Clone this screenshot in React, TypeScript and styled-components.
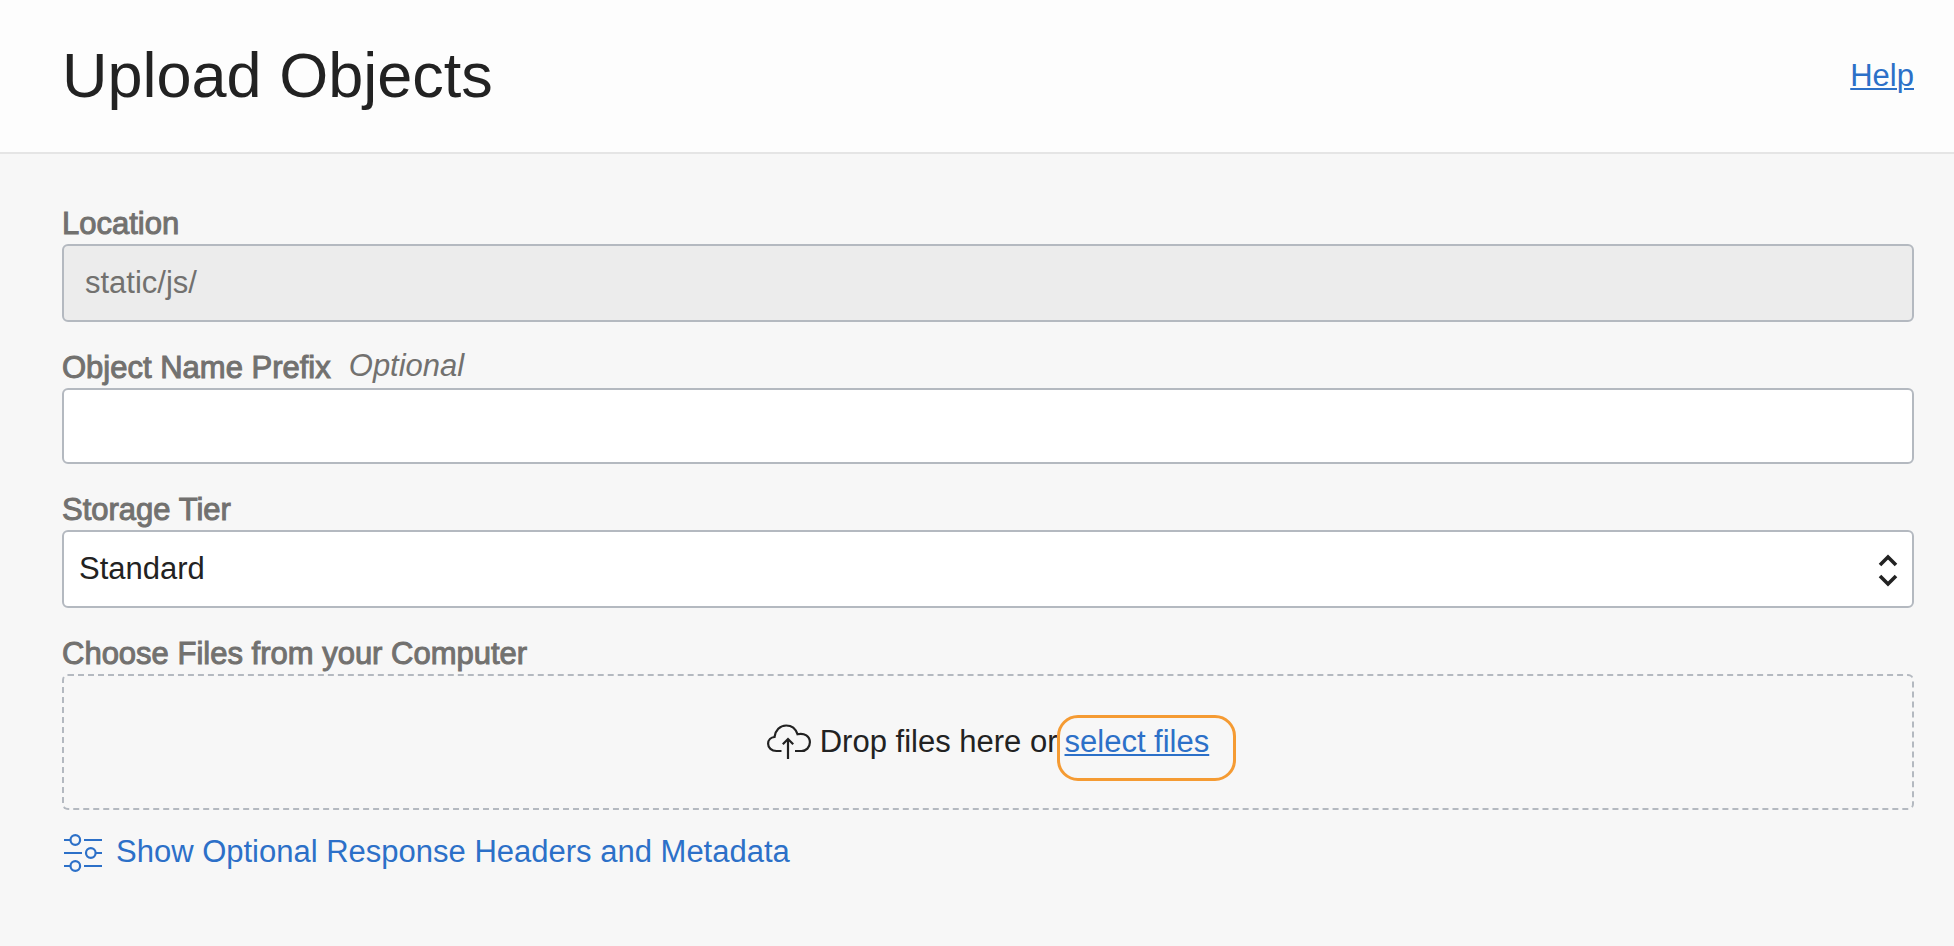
import React from "react";
import styled, { createGlobalStyle, css } from "styled-components";

const GlobalStyle = createGlobalStyle`
  *, *::before, *::after { box-sizing: border-box; }
  body {
    margin: 0;
    background: #f7f7f7;
    color: #222;
    font: 31px/36px "Helvetica Neue", "Liberation Sans", Arial, sans-serif;
  }
`;

const Header = styled.header`
  display: flex;
  align-items: center;
  justify-content: space-between;
  padding: 40px 40px 40px 62px;
  background: #fdfdfd;
  border-bottom: 2px solid #e5e5e5;
`;

const Title = styled.h1`
  margin: 0;
  padding-bottom: 2px;
  font-size: 63px;
  line-height: 70px;
  font-weight: 400;
`;

const HelpLink = styled.a`
  color: #2c70c8;
  text-decoration: underline;
  text-decoration-thickness: 2px;
  text-underline-offset: 2px;
`;

const Form = styled.form`
  display: flex;
  flex-direction: column;
  gap: 28px;
  padding: 52px 40px 64px 62px;
`;

const Field = styled.div`
  display: flex;
  flex-direction: column;
  gap: 2px;
`;

const LabelRow = styled.div`
  display: flex;
  gap: 18px;
`;

const Label = styled.label`
  color: #72716f;
  -webkit-text-stroke: 1px #72716f;
`;

const Hint = styled.em`
  height: 32px;
  line-height: 32px;
  color: #72716f;
`;

const controlStyle = css`
  width: 100%;
  border: 2px solid #b4b9c0;
  border-radius: 6px;
  font: inherit;
  color: #222;
  background: #fff;
`;

const TextInput = styled.input`
  ${controlStyle}
  height: 76px;
  padding: 0 21px;

  &:disabled {
    height: 78px;
    color: #72716f;
    background: #ececec;
  }
`;

const SelectFrame = styled.div`
  position: relative;
  display: flex;
`;

const Select = styled.select`
  ${controlStyle}
  height: 78px;
  padding: 0 60px 0 15px;
  appearance: none;
`;

const SelectArrows = styled.svg`
  position: absolute;
  top: 23px;
  right: 16px;
  pointer-events: none;
`;

const DropZone = styled.div`
  display: flex;
  align-items: center;
  justify-content: center;
  height: 136px;
  border: 2px dashed #b4b9c0;
  border-radius: 6px;
`;

const DropText = styled.span`
  margin: 0 7px 0 9px;
`;

const TextButton = styled.button`
  display: flex;
  align-items: flex-start;
  gap: 14px;
  padding: 0;
  border: 0;
  background: none;
  font: inherit;
  color: #2c70c8;
  cursor: pointer;
`;

const SelectFilesButton = styled(TextButton)`
  position: relative;
  text-decoration: underline;
  text-decoration-thickness: 2px;
  text-underline-offset: 2px;

  &::after {
    content: "";
    position: absolute;
    inset: -9px -27px -21px -8px;
    border: 3px solid #f59b33;
    border-radius: 21px;
    pointer-events: none;
  }
`;

const Options = styled.div`
  display: flex;
  margin-top: -4px;
  padding-left: 2px;
`;

const CloudIcon = () => (
  <svg width="44" height="36" viewBox="0 0 44 36" fill="none" stroke="#222" strokeWidth="2.2" aria-hidden="true">
    <path d="M14.500 27H9.500C4.500 27 1.100 23.800 1.100 19.700C1.100 16 4 13.300 7.500 13C8.300 6.500 12.800 1.500 19.200 1.500C24.500 1.500 28.800 5 30.500 10.200C37.500 8.500 42.900 12.500 42.900 18.300C42.900 23.500 39 27 34.500 27H28" />
    <path d="M21 35V15M15.800 20.300L21 15L26.200 20.300" />
  </svg>
);

const SlidersIcon = () => (
  <svg width="38" height="38" viewBox="0 0 38 38" fill="none" stroke="#2c70c8" strokeWidth="2.2" aria-hidden="true">
    <circle cx="11.300" cy="6" r="4.800" />
    <circle cx="26.800" cy="19" r="4.800" />
    <circle cx="11.300" cy="32" r="4.800" />
    <path d="M0 6H6.500M20 6H38M0 19H18M31.600 19H38M0 32H6.500M20 32H38" />
  </svg>
);

export default function App() {
  return (
    <>
      <GlobalStyle />
      <Header>
        <Title>Upload Objects</Title>
        <HelpLink href="#help">Help</HelpLink>
      </Header>
      <Form onSubmit={(event) => event.preventDefault()}>
        <Field>
          <LabelRow>
            <Label htmlFor="location">Location</Label>
          </LabelRow>
          <TextInput id="location" type="text" value="static/js/" disabled readOnly />
        </Field>
        <Field>
          <LabelRow>
            <Label htmlFor="prefix">Object Name Prefix</Label>
            <Hint id="prefix-hint">Optional</Hint>
          </LabelRow>
          <TextInput id="prefix" type="text" aria-describedby="prefix-hint" />
        </Field>
        <Field>
          <LabelRow>
            <Label htmlFor="tier">Storage Tier</Label>
          </LabelRow>
          <SelectFrame>
            <Select id="tier" defaultValue="standard">
              <option value="standard">Standard</option>
            </Select>
            <SelectArrows width="20" height="34" viewBox="0 0 20 34" fill="none" stroke="#222" strokeWidth="3.6" aria-hidden="true">
              <path d="M2 12L10 4L18 12M2 23L10 31L18 23" />
            </SelectArrows>
          </SelectFrame>
        </Field>
        <Field>
          <LabelRow>
            <Label htmlFor="select-files">Choose Files from your Computer</Label>
          </LabelRow>
          <DropZone>
            <CloudIcon />
            <DropText>Drop files here or</DropText>
            <SelectFilesButton id="select-files" type="button">
              select files
            </SelectFilesButton>
          </DropZone>
        </Field>
        <Options>
          <TextButton type="button">
            <SlidersIcon />
            Show Optional Response Headers and Metadata
          </TextButton>
        </Options>
      </Form>
    </>
  );
}
